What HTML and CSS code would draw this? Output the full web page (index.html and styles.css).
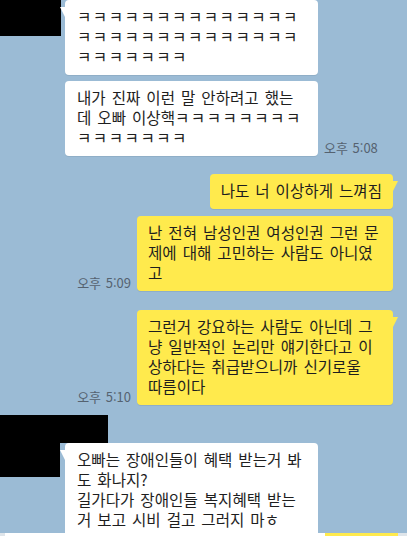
FILE: index.html
```html
<!DOCTYPE html>
<html lang="ko">
<head>
<meta charset="utf-8">
<link rel="stylesheet" href="styles.css">
</head>
<body>
<div class="chat">
  <div class="group g1">
    <div class="avatar a1"></div>
    <div class="msgs">
      <div class="row">
        <div class="bubble white tail"><span class="k">ㅋㅋㅋㅋㅋㅋㅋㅋㅋㅋㅋㅋㅋㅋ</span><br><span class="k">ㅋㅋㅋㅋㅋㅋㅋㅋㅋㅋㅋㅋㅋㅋ</span><br><span class="k">ㅋㅋㅋㅋㅋㅋㅋ</span></div>
      </div>
      <div class="row">
        <div class="bubble white">내가 진짜 이런 말 안하려고 했는<br>데 오빠 이상핵<span class="k">ㅋㅋㅋㅋㅋㅋㅋㅋ</span><br><span class="k">ㅋㅋㅋㅋㅋㅋㅋ</span></div>
        <span class="time">오후 5:08</span>
      </div>
    </div>
  </div>

  <div class="group right g2">
    <div class="row">
      <div class="bubble yellow tail">나도 너 이상하게 느껴짐</div>
    </div>
    <div class="row">
      <span class="time">오후 5:09</span>
      <div class="bubble yellow wide">난 전혀 남성인권 여성인권 그런 문<br>제에 대해 고민하는 사람도 아니였<br>고</div>
    </div>
  </div>

  <div class="group right g3">
    <div class="row">
      <span class="time">오후 5:10</span>
      <div class="bubble yellow wide tail">그런거 강요하는 사람도 아닌데 그<br>냥 일반적인 논리만 얘기한다고 이<br>상하다는 취급받으니까 신기로울<br>따름이다</div>
    </div>
  </div>

  <div class="group g4">
    <div class="name"></div>
    <div class="lrow">
      <div class="avatar a2"></div>
      <div class="bubble white tail">오빠는 장애인들이 혜택 받는거 봐<br>도 화나지?<br>길가다가 장애인들 복지혜택 받는<br>거 보고 시비 걸고 그러지 마ㅎ</div>
    </div>
  </div>
</div>
<div class="inputbar"><div class="field"></div><div class="send"></div></div>
</body>
</html>
```

FILE: styles.css
```css
html, body {
  margin: 0;
  padding: 0;
}
body {
  width: 407px;
  height: 536px;
  overflow: hidden;
  position: relative;
  background: #9bbbd5;
  font-family: "Noto Sans CJK KR", "Noto Sans", sans-serif;
}
.chat {
  display: flex;
  flex-direction: column;
  padding-right: 14px;
}
.group {
  display: flex;
}
.g1 {
  align-items: flex-start;
  gap: 4px;
}
.avatar {
  background: #000;
  flex: none;
}
.a1 {
  width: 61px;
  height: 36px;
}
.msgs {
  display: flex;
  flex-direction: column;
  gap: 6px;
}
.row {
  display: flex;
  align-items: flex-end;
  gap: 6px;
}
.right {
  flex-direction: column;
  align-items: flex-end;
}
.g2 {
  margin-top: 18px;
  gap: 7px;
}
.g3 {
  margin-top: 19px;
}
.g4 {
  margin-top: 10px;
  flex-direction: column;
  align-items: flex-start;
}
.name {
  width: 108px;
  height: 28px;
  background: #000;
}
.lrow {
  display: flex;
  align-items: flex-start;
  gap: 5px;
}
.a2 {
  width: 60px;
  height: 34px;
}
.bubble {
  position: relative;
  box-sizing: border-box;
  padding: 6px 12px 9px;
  border-radius: 4px;
  font-size: 15.6px;
  line-height: 20px;
  word-spacing: 1.6px;
  color: #1e1e1e;
  white-space: nowrap;
  box-shadow: 0 1px 0 rgba(60, 80, 100, 0.12);
}
.k {
  letter-spacing: 1.5px;
}
.white {
  background: #fff;
  width: 253px;
}
.yellow {
  background: #ffea4d;
  padding-left: 11px;
  padding-right: 11px;
}
.wide {
  width: 256px;
}
.tail.white::before {
  content: "";
  position: absolute;
  left: -5px;
  top: 7px;
  border-top: 10px solid #fff;
  border-left: 5px solid transparent;
}
.tail.yellow::before {
  content: "";
  position: absolute;
  right: -5px;
  top: 7px;
  border-top: 10px solid #ffea4d;
  border-right: 5px solid transparent;
}
.time {
  font-size: 13px;
  line-height: 14px;
  color: #556270;
  margin-bottom: 1px;
  word-spacing: 1px;
  white-space: nowrap;
}
.inputbar {
  position: absolute;
  left: 0;
  top: 533px;
  width: 407px;
  height: 3px;
  background: #dfe5ea;
  display: flex;
}
.field {
  margin-left: 5px;
  width: 320px;
  background: #fff;
}
.send {
  width: 73px;
  background: #ffea4d;
}
```
